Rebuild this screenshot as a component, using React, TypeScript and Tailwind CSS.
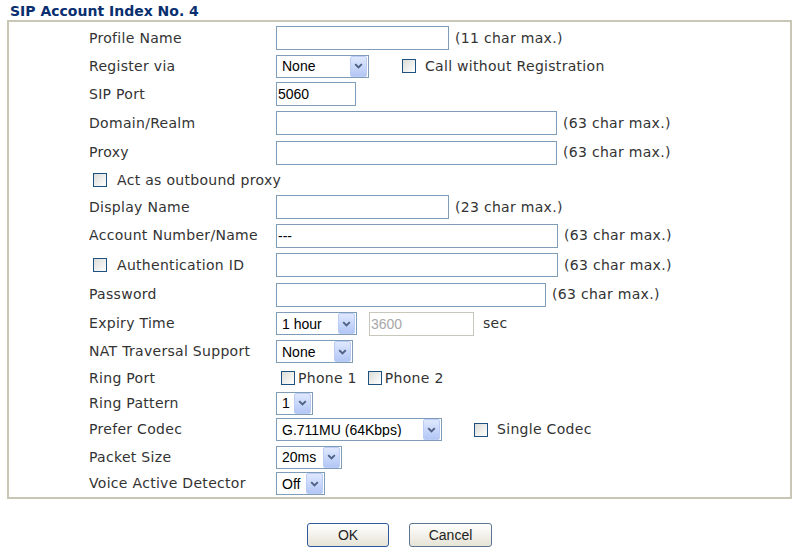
import React from "react";

const LABEL = "font-['DejaVu_Sans',Verdana,sans-serif] text-[14px] tracking-[0.3px] text-[#333333] whitespace-nowrap";
const FIELD = "font-['Liberation_Sans',Arial,sans-serif] text-[14px] text-black";

function Box({ w, text = "", disabled = false }: { w: string; text?: string; disabled?: boolean }) {
  return (
    <div
      className={`${w} h-[24px] border ${disabled ? "border-[#c9c7ba] text-[#a8a8a8]" : "border-[#7f9db9] text-black"} bg-white flex items-center pl-[1px] font-['Liberation_Sans',Arial,sans-serif] text-[14px] leading-none`}
    >
      {text}
    </div>
  );
}

function Arrow() {
  return (
    <div className="w-[17px] h-[21px] m-[1px] rounded-[2px] border border-[#bccdf5] bg-linear-to-b from-[#dfe8fe] to-[#b3c7f5] flex items-center justify-center">
      <svg width="9" height="6" viewBox="0 0 9 6">
        <path d="M1.2 1.2 L4.5 4.5 L7.8 1.2" fill="none" stroke="#4d6185" strokeWidth="1.9" />
      </svg>
    </div>
  );
}

function Select({ w, text }: { w: string; text: string }) {
  return (
    <div className={`${w} h-[23px] border border-[#7f9db9] bg-white flex items-center`}>
      <div className={`flex-1 pl-[5px] ${FIELD} leading-none whitespace-nowrap overflow-hidden`}>{text}</div>
      <Arrow />
    </div>
  );
}

function Check() {
  return <div className="w-[14px] h-[14px] border border-[#1c5180] bg-linear-to-br from-[#dcdcd7] to-white shrink-0" />;
}

function Row({ h, label, children, check = false }: { h: string; label: string; children?: React.ReactNode; check?: boolean }) {
  return (
    <div className={`${h} flex items-center`}>
      {check ? (
        <div className="w-[267px] pl-[84px] flex items-center gap-[10px]">
          <Check />
          <span className={LABEL}>{label}</span>
        </div>
      ) : (
        <div className={`w-[267px] pl-[80px] ${LABEL}`}>{label}</div>
      )}
      <div className="flex items-center">{children}</div>
    </div>
  );
}

function Note({ children, ml = "ml-[6px]" }: { children: React.ReactNode; ml?: string }) {
  return <span className={`${ml} ${LABEL}`}>{children}</span>;
}

export default function App() {
  return (
    <div className="w-[799px] h-[556px] bg-white overflow-hidden">
      <div className="h-[20px] pl-[10px] pt-[3px] font-['DejaVu_Sans',Verdana,sans-serif] text-[14px] font-bold leading-[16px] text-[#0a2f6f]">
        SIP Account Index No. 4
      </div>
      <div className="ml-[7px] w-[785px] border-2 border-[#c9c6b6] pt-[2px]">
        <Row h="h-[28px]" label="Profile Name">
          <Box w="w-[173px]" />
          <Note>(11 char max.)</Note>
        </Row>
        <Row h="h-[28px]" label="Register via">
          <Select w="w-[93px]" text="None" />
          <div className="ml-[33px] flex items-center gap-[9px]">
            <Check />
            <span className={LABEL}>Call without Registration</span>
          </div>
        </Row>
        <Row h="h-[28px]" label="SIP Port">
          <Box w="w-[80px]" text="5060" />
        </Row>
        <Row h="h-[30px]" label="Domain/Realm">
          <Box w="w-[281px]" />
          <Note>(63 char max.)</Note>
        </Row>
        <Row h="h-[29px]" label="Proxy">
          <Box w="w-[281px]" />
          <Note>(63 char max.)</Note>
        </Row>
        <div className="h-[26px] flex items-center pl-[84px] gap-[10px]">
          <Check />
          <span className={LABEL}>Act as outbound proxy</span>
        </div>
        <Row h="h-[28px]" label="Display Name">
          <Box w="w-[173px]" />
          <Note>(23 char max.)</Note>
        </Row>
        <Row h="h-[29px]" label="Account Number/Name">
          <Box w="w-[282px]" text="---" />
          <Note>(63 char max.)</Note>
        </Row>
        <Row h="h-[30px]" label="Authentication ID" check>
          <Box w="w-[282px]" />
          <Note>(63 char max.)</Note>
        </Row>
        <Row h="h-[29px]" label="Password">
          <Box w="w-[270px]" />
          <Note>(63 char max.)</Note>
        </Row>
        <Row h="h-[29px]" label="Expiry Time">
          <Select w="w-[81px]" text="1 hour" />
          <div className="ml-[12px]">
            <Box w="w-[105px]" text="3600" disabled />
          </div>
          <Note ml="ml-[9px]">sec</Note>
        </Row>
        <Row h="h-[27px]" label="NAT Traversal Support">
          <Select w="w-[77px]" text="None" />
        </Row>
        <Row h="h-[26px]" label="Ring Port">
          <div className="ml-[5px] flex items-center">
            <Check />
            <span className={`ml-[3px] ${LABEL}`}>Phone 1</span>
            <div className="ml-[11px]"><Check /></div>
            <span className={`ml-[3px] ${LABEL}`}>Phone 2</span>
          </div>
        </Row>
        <Row h="h-[24px]" label="Ring Pattern">
          <Select w="w-[37px]" text="1" />
        </Row>
        <Row h="h-[29px]" label="Prefer Codec">
          <Select w="w-[166px]" text="G.711MU (64Kbps)" />
          <div className="ml-[32px] flex items-center gap-[9px]">
            <Check />
            <span className={LABEL}>Single Codec</span>
          </div>
        </Row>
        <Row h="h-[26px]" label="Packet Size">
          <Select w="w-[66px]" text="20ms" />
        </Row>
        <Row h="h-[27px]" label="Voice Active Detector">
          <Select w="w-[49px]" text="Off" />
        </Row>
      </div>
      <div className="mt-[24px] flex justify-center gap-[20px]">
        <button className="w-[82px] h-[24px] rounded-[3px] border border-[#2c5a9c] bg-linear-to-b from-white to-[#e6e3d6] font-['Liberation_Sans',Arial,sans-serif] text-[14px] text-[#222]">
          OK
        </button>
        <button className="w-[83px] h-[24px] rounded-[3px] border border-[#5d7590] bg-linear-to-b from-white to-[#e6e3d6] font-['Liberation_Sans',Arial,sans-serif] text-[14px] text-[#222]">
          Cancel
        </button>
      </div>
    </div>
  );
}
